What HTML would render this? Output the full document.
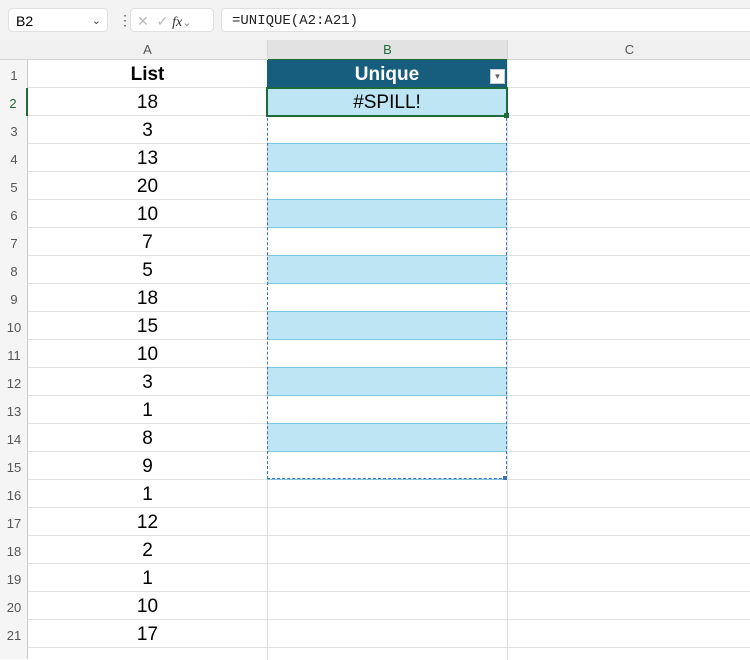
<!DOCTYPE html><html><head><style>
body{margin:0;width:750px;height:659px;background:#fff;font-family:"Liberation Sans",Arial,sans-serif;position:relative;overflow:hidden}
.tb{position:absolute;left:0;top:0;width:750px;height:40px;background:#f3f3f3}
.box{position:absolute;background:#fff;border:1px solid #e0e0e0;border-radius:4px;height:24px;top:8px;font-size:14px;line-height:24px}
.ch{position:absolute;top:40px;height:19px;background:#f0f0f0;border-bottom:1px solid #d4d4d4;font-size:13px;color:#555;text-align:center;line-height:20px}
.rh{position:absolute;left:0;width:28px;font-size:13px;color:#555;text-align:center;box-sizing:border-box}
.c{position:absolute;font-size:18px;text-align:center;box-sizing:border-box;border-bottom:1px solid #e1e1e1}
</style></head><body>
<div class="tb"></div>
<div class="box" style="left:8px;width:100px;padding-left:7px;box-sizing:border-box">B2<span style="position:absolute;right:6px;font-size:11px;color:#444">&#8964;</span></div>
<div style="position:absolute;left:118px;top:12px;color:#555;font-size:14px">⋮</div>
<div class="box" style="left:130px;width:84px;color:#bbb;box-sizing:border-box;padding-left:6px">✕ &nbsp;✓ <i style="color:#333;font-family:'Liberation Serif',serif">fx</i><span style="color:#888;font-size:11px">&#8964;</span></div>
<div class="box" style="left:221px;width:540px;padding-left:10px;box-sizing:border-box;font-family:'Liberation Mono',monospace;font-size:14px;color:#222">=UNIQUE(A2:A21)</div>
<div style="position:absolute;left:0;top:40px;width:28px;height:619px;background:#f5f5f5;border-right:1px solid #c8c8c8;box-sizing:border-box"></div>
<div class="ch" style="left:0;width:28px"></div>
<div class="ch" style="left:28px;width:239px;border-right:1px solid #d4d4d4">A</div>
<div class="ch" style="left:268px;width:239px;background:#e2e2e2;color:#1e6b3a;border-bottom:1px solid #1e6b3a">B</div>
<div class="ch" style="left:507px;width:243px;border-left:1px solid #d4d4d4">C</div>
<div style="position:absolute;left:267px;top:60px;width:1px;height:600px;background:#e1e1e1"></div>
<div style="position:absolute;left:507px;top:60px;width:1px;height:600px;background:#e1e1e1"></div>
<div style="position:absolute;left:28px;top:647px;width:722px;height:1px;background:#e1e1e1"></div>
<div id="g"></div>
<script>
var a=["List",18,3,13,20,10,7,5,18,15,10,3,1,8,9,1,12,2,1,10,17],h="";
for(var i=0;i<21;i++){var t=60+28*i;
h+='<div class="rh" style="top:'+t+'px;height:28px;line-height:32px;'+(i==1?'color:#1e6b3a;border-right:2px solid #1e6b3a':'')+'">'+(i+1)+'</div>';
h+='<div class="c" style="left:28px;top:'+t+'px;width:239px;height:28px;line-height:30px;font-size:19px;'+(i==0?'font-weight:bold':'')+'">'+a[i]+'</div>';
h+='<div class="c" style="left:508px;top:'+t+'px;width:242px;height:28px"></div>';
if(i==0)h+='<div class="c" style="left:267px;top:60px;width:240px;height:28px;background:#175d7e;color:#fff;font-weight:bold;line-height:30px;font-size:19px;border:none">Unique<div style="position:absolute;right:2px;top:9px;width:15px;height:15px;background:#fff;border:1px solid #ccc;box-sizing:border-box;font-size:8px;color:#666;line-height:14px">▼</div></div>';
else if(i<15)h+='<div class="c" style="left:267px;top:'+t+'px;width:240px;height:28px;background:'+(i%2==1?'#bee5f3':'#fff')+';border-bottom:1px solid #7cc6e0;line-height:30px;font-size:19px">'+(i==1?'#SPILL!':'')+'</div>';
else h+='<div class="c" style="left:268px;top:'+t+'px;width:239px;height:28px"></div>';}
document.getElementById('g').innerHTML=h;
</script>
<div style="position:absolute;left:267px;top:88px;width:240px;height:391px;border:1px dashed #3f6fc0;box-sizing:border-box"></div>
<div style="position:absolute;left:266px;top:87px;width:242px;height:30px;border:2px solid #1e6b3a;box-sizing:border-box"></div>
<div style="position:absolute;left:504px;top:113px;width:5px;height:5px;background:#1e6b3a"></div>
<div style="position:absolute;left:503px;top:476px;width:4px;height:4px;background:#3f6fc0"></div>
</body></html>
